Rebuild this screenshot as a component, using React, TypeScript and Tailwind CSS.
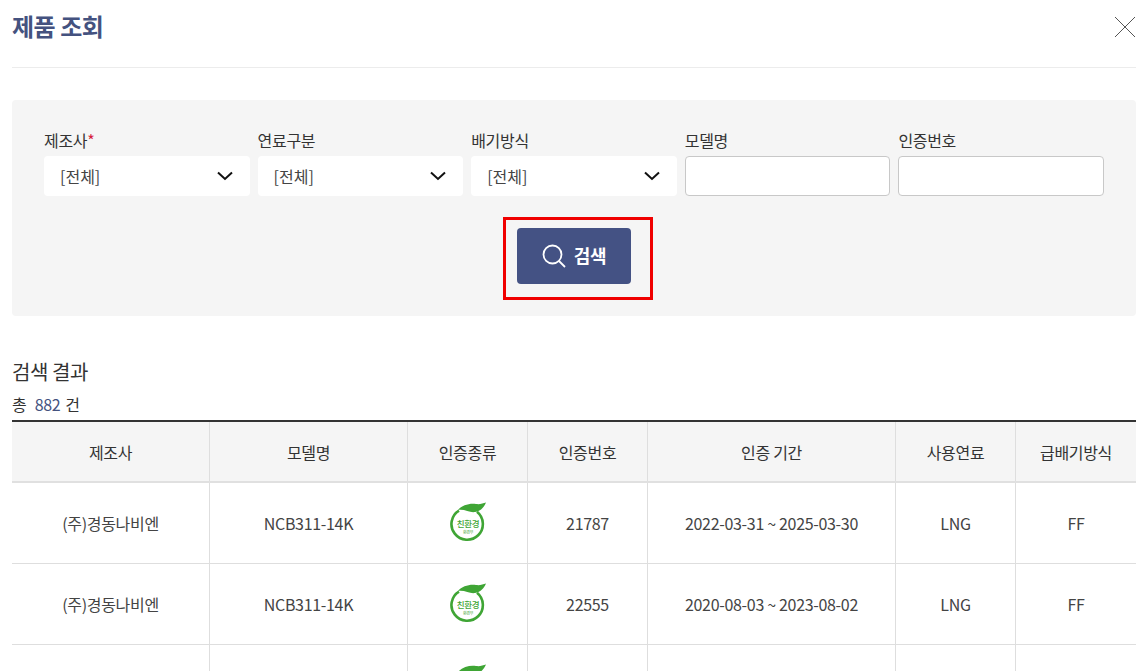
import React from "react";

const font = { fontFamily: '"Noto Sans CJK KR", "Noto Sans", sans-serif' };

function Chevron() {
  return (
    <svg width="18" height="12" viewBox="0 0 18 12" fill="none" className="shrink-0">
      <path d="M2 2.5 L9 9 L16 2.5" stroke="#111" strokeWidth="2" />
    </svg>
  );
}

function SelectField({ label, required }: { label: string; required?: boolean }) {
  return (
    <div className="flex flex-col">
      <label className="text-[16px] tracking-[-0.32px] leading-[20px] h-[26px] text-[#333]">
        {label}
        {required && <span className="text-[#d6213c]">*</span>}
      </label>
      <div className="h-10 bg-white rounded flex items-center justify-between pl-[16px] pr-[16px]">
        <span className="text-[16px] text-[#444]">[전체]</span>
        <Chevron />
      </div>
    </div>
  );
}

function InputField({ label }: { label: string }) {
  return (
    <div className="flex flex-col">
      <label className="text-[16px] tracking-[-0.32px] leading-[20px] h-[26px] text-[#333]">{label}</label>
      <input className="h-10 bg-white rounded border border-[#c8c8c8]" />
    </div>
  );
}

function EcoLogo() {
  return (
    <svg width="36" height="40" viewBox="0 0 36 40" className="block">
      <path d="M8 8 C12 3 20 1 26 2 C30 2.5 33 1.5 36 0.5 C34 5 31 9 25 10 C20 11 15 7 8 8 Z" fill="#3fa535" />
      <path d="M27 9.8 A15.7 15.7 0 1 1 9 8.6" fill="none" stroke="#3fa535" strokeWidth="2.6" />
      <text x="18" y="25" textAnchor="middle" fontSize="8.5" fontWeight="500" fill="#3fa535" style={font}>친환경</text>
      <text x="18" y="31.5" textAnchor="middle" fontSize="4" fill="#3fa535" style={font}>환경부</text>
    </svg>
  );
}

const grid = "grid grid-cols-[198px_198px_120px_120px_248px_120px_120px]";

const rows = [
  ["21787", "2022-03-31 ~ 2025-03-30"],
  ["22555", "2020-08-03 ~ 2023-08-02"],
];

const headers = ["제조사", "모델명", "인증종류", "인증번호", "인증 기간", "사용연료", "급배기방식"];

export default function App() {
  return (
    <div style={font} className="h-[671px] w-[1137px] overflow-hidden bg-white pl-3 pr-px text-[#333]">
      <header className="h-[68px] border-b border-[#ececec] flex items-start justify-between">
        <h1 className="text-[24px] tracking-[-0.48px] leading-[30px] mt-[11px] font-bold text-[#44527f]">제품 조회</h1>
        <svg width="22" height="22" viewBox="0 0 22 22" className="mt-[16px]" fill="none">
          <path d="M1 1 L21 21 M21 1 L1 21" stroke="#555" strokeWidth="1" />
        </svg>
      </header>

      <section className="mt-8 h-[216px] bg-[#f5f5f5] rounded pt-[30px] px-8">
        <div className="grid grid-cols-5 gap-x-2">
          <SelectField label="제조사" required />
          <SelectField label="연료구분" />
          <SelectField label="배기방식" />
          <InputField label="모델명" />
          <InputField label="인증번호" />
        </div>
        <div className="flex justify-center mt-8">
          <div className="relative">
            <button className="w-[114px] h-14 rounded bg-[#445284] text-white flex items-center justify-center gap-[8px] text-[18px] tracking-[-0.36px] font-bold">
              <svg width="24" height="24" viewBox="0 0 24 24" fill="none" stroke="#fff" strokeWidth="1.8">
                <circle cx="10.5" cy="10.5" r="9" />
                <path d="M17 17 L23 23" />
              </svg>
              <span className="pb-[2px]">검색</span>
            </button>
            <div className="absolute -left-[14px] -top-[11px] w-[150px] h-[83px] border-[3px] border-[#f00000]" />
          </div>
        </div>
      </section>

      <h2 className="mt-[42px] text-[20px] tracking-[-0.4px] leading-[28px] font-normal text-[#333]">검색 결과</h2>
      <p className="mt-[8px] h-[26px] text-[16px] tracking-[-0.32px] leading-[21px] text-[#333]">
        총 <span className="text-[#44527f] mx-[5px]">882</span>건
      </p>

      <div className="border-t-2 border-[#333]">
        <div className={`${grid} h-[61px] bg-[#f5f5f5] border-b-2 border-[#e0e0e0]`}>
          {headers.map((h, i) => (
            <div key={h} className={`flex items-center justify-center text-[16px] tracking-[-0.32px] ${i < 6 ? "border-r border-[#dedede]" : ""}`}>
              {h}
            </div>
          ))}
        </div>
        {rows.map((r) => (
          <div key={r[0]} className={`${grid} h-[81px] border-b border-[#dedede] text-[16px] tracking-[-0.32px] text-[#444]`}>
            <div className="flex items-center justify-center border-r border-[#dedede]">(주)경동나비엔</div>
            <div className="flex items-center justify-center border-r border-[#dedede]">NCB311-14K</div>
            <div className="flex justify-center pt-[19px] border-r border-[#dedede]">
              <EcoLogo />
            </div>
            <div className="flex items-center justify-center border-r border-[#dedede]">{r[0]}</div>
            <div className="flex items-center justify-center border-r border-[#dedede]">{r[1]}</div>
            <div className="flex items-center justify-center border-r border-[#dedede]">LNG</div>
            <div className="flex items-center justify-center">FF</div>
          </div>
        ))}
        <div className={`${grid} h-[40px]`}>
          <div className="border-r border-[#dedede]" />
          <div className="border-r border-[#dedede]" />
          <div className="border-r border-[#dedede] flex justify-center pt-[19px]">
            <EcoLogo />
          </div>
          <div className="border-r border-[#dedede]" />
          <div className="border-r border-[#dedede]" />
          <div className="border-r border-[#dedede]" />
          <div />
        </div>
      </div>
    </div>
  );
}
